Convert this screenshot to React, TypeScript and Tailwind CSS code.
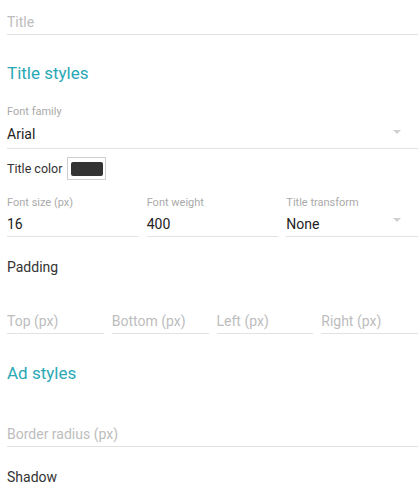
// Widget settings panel: title field, title styles and ad styles.

type FieldProps = {
  label?: string;
  value?: string;
  placeholder?: string;
  select?: boolean;
  gap?: string;
  pb?: string;
};

function Caret() {
  return (
    <span
      className="absolute right-[17px] bottom-[14px] h-0 w-0 border-x-[4px] border-t-[4px] border-x-transparent border-t-[#d0d0d0]"
      aria-hidden
    />
  );
}

function Field({ label, value, placeholder, select, gap = "mt-[5px]", pb = "pb-[2px]" }: FieldProps) {
  return (
    <div className="min-w-0">
      {label && <div className="h-[13px] text-[11px] leading-[13px] text-[#aaaaaa]">{label}</div>}
      <div className={`relative border-b border-[#e2e2e2] ${label ? gap : ""} ${pb}`}>
        <div className={`h-5 text-[14px] leading-5 ${value ? "text-[#222222]" : "text-[#bdbdbd]"}`}>
          {value ?? placeholder}
        </div>
        {select && <Caret />}
      </div>
    </div>
  );
}

function SectionTitle({ children, className }: { children: string; className: string }) {
  return <h2 className={`h-6 text-[17px] leading-6 text-[#29a8b6] ${className}`}>{children}</h2>;
}

export default function App() {
  return (
    <div
      className="min-h-[493px] bg-white pl-[7px] pr-[1px] pt-[12px]"
      style={{ fontFamily: "Roboto, 'Liberation Sans', sans-serif" }}
    >
      <Field placeholder="Title" />

      <SectionTitle className="mt-[26px]">Title styles</SectionTitle>

      <div className="mt-[20px]">
        <Field label="Font family" value="Arial" select gap="mt-[6px]" pb="pb-[4px]" />
      </div>

      <div className="mt-[8px] flex items-center gap-[5px]">
        <span className="text-[12.5px] leading-4 text-[#333333]">Title color</span>
        <span className="flex h-[23px] w-[39px] items-center justify-center border border-[#cfcfcf]">
          <span className="h-[14px] w-[32px] rounded-[2px] bg-[#333333]" />
        </span>
      </div>

      <div className="mt-[16px] grid grid-cols-3 gap-[8px]">
        <Field label="Font size (px)" value="16" />
        <Field label="Font weight" value="400" />
        <Field label="Title transform" value="None" select />
      </div>

      <div className="mt-[20px] h-5 text-[14px] leading-5 text-[#333333]">Padding</div>

      <div className="mt-[34px] grid grid-cols-4 gap-[8px]">
        <Field placeholder="Top (px)" />
        <Field placeholder="Bottom (px)" />
        <Field placeholder="Left (px)" />
        <Field placeholder="Right (px)" />
      </div>

      <SectionTitle className="mt-[27px]">Ad styles</SectionTitle>

      <div className="mt-[39px]">
        <Field placeholder="Border radius (px)" />
      </div>

      <div className="mt-[20px] h-5 text-[14px] leading-5 text-[#333333]">Shadow</div>
    </div>
  );
}
